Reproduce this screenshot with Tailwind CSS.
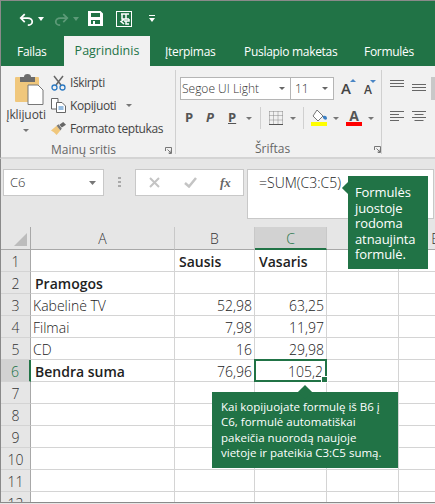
<!DOCTYPE html>
<html lang="lt">

<head>
    <meta charset="UTF-8">
    <title>Formulės kopijavimas</title>
    <script src="https://cdn.jsdelivr.net/npm/@tailwindcss/browser@4"></script>
</head>

<body class="bg-white">
    <div class="relative w-[435px] h-[504px] overflow-hidden bg-[#e6e6e6] font-['Open_Sans',sans-serif] text-[#444]">
        <!-- title bar -->
        <div class="h-[66px] bg-[#217346] border-t border-l border-[#8a8a8a] flex flex-col">
            <div class="h-[35px] flex items-center pl-[18px] text-white">
                <svg class="w-[15px] h-[16px]" viewBox="0 0 17 16" fill="none" stroke="#fff" stroke-width="2"><path d="M3 7 H10 C13 7 15 9 15 11 C15 13 13 15 10 15"/><path d="M6.500 2.500 L2 7 L6.500 11.500"/></svg>
                <svg class="w-[6px] h-[4px] ml-[4px]" viewBox="0 0 6 4" fill="#fff"><path d="M0 0H6L3 4Z"/></svg>
                <svg class="w-[15px] h-[16px] ml-[10px]" viewBox="0 0 17 16" fill="none" stroke="#5d9a78" stroke-width="2"><path d="M14 7 H7 C4 7 2 9 2 11 C2 13 4 15 7 15"/><path d="M10.500 2.500 L15 7 L10.500 11.500"/></svg>
                <svg class="w-[6px] h-[4px] ml-[4px]" viewBox="0 0 6 4" fill="#5d9a78"><path d="M0 0H6L3 4Z"/></svg>
                <svg class="w-[15px] h-[15px] ml-[9px]" viewBox="0 0 15 15" fill="#fff"><path d="M0 0H12.500L15 2.500V15H0ZM3 2V6H12V2ZM3 9V13H5V10H7V13H12V9Z"/></svg>
                <svg class="w-[16px] h-[16px] ml-[13px]" viewBox="0 0 16 16" fill="none" stroke="#fff"><rect x=".5" y=".5" width="15" height="15"/><path stroke-width="1.500" d="M5 3H13M10 3V8M6 3V8H13M13 8V10H8M8 13L5 10.500L8 8.500M10 10V13H13"/></svg>
                <svg class="w-[6px] h-[7px] ml-[17px]" viewBox="0 0 6 7" fill="#fff"><path d="M0 0H6V1H0ZM0 3H6L3 7Z"/></svg>
            </div>
            <!-- tabs -->
            <div class="flex h-[30px] text-[12px] tracking-[-0.3px] text-white">
                <div class="w-[63px] pl-[16px] pt-[7px]">Failas</div>
                <div class="w-[86px] bg-[#f1f1f1] text-[#217346] text-center text-[12.500px] tracking-normal pt-[6px]">Pagrindinis</div>
                <div class="w-[93px] pl-[15px] pt-[7px]">Įterpimas</div>
                <div class="w-[121px] pl-[1px] pt-[7px]">Puslapio maketas</div>
                <div class="pt-[7px]">Formulės</div>
            </div>
        </div>

        <!-- ribbon -->
        <div class="relative h-[93px] bg-[#f1f1f1] border-b-2 border-[#d4d4d4] border-l border-l-[#8a8a8a] flex pt-[4px] text-[12px]">
            <!-- clipboard group -->
            <div class="w-[175px] h-[84px] border-r border-[#d0d0d0] flex flex-col">
                <div class="flex h-[66px]">
                    <div class="w-[50px] flex flex-col items-center">
                        <svg class="w-[29px] h-[31px] mt-[4px] ml-[7px]" viewBox="0 0 29 31">
                            <rect x="0" y="3" width="24" height="25" rx="1" fill="#f0c77c"/>
                            <path d="M5 3H9Q9 0 12.500 0Q16 0 16 3H20V8H5Z" fill="#6b6b6b"/>
                            <path d="M13 11H23L28 16V30.500H13Z" fill="#fff" stroke="#777"/>
                        </svg>
                        <div class="text-[12px] tracking-[-0.1px] leading-[14px] mt-[3px]">Įklijuoti</div>
                        <svg class="w-[6px] h-[3px] mt-[7px]" viewBox="0 0 6 3" fill="#777"><path d="M0 0H6L3 3Z"/></svg>
                    </div>
                    <div class="flex flex-col pt-[1px] text-[12px] tracking-[-0.4px] leading-[23px]">
                        <div class="flex items-center gap-[4px]">
                            <svg class="w-[15px] h-[16px]" viewBox="0 0 15 16" fill="none"><path d="M3 1L10 10M12 1L5 10" stroke="#666" stroke-width="1.500"/><circle cx="3.500" cy="12.500" r="2.500" stroke="#2b79c2" stroke-width="1.300"/><circle cx="11.500" cy="12.500" r="2.500" stroke="#2b79c2" stroke-width="1.300"/></svg>
                            <span>Iškirpti</span>
                        </div>
                        <div class="flex items-center gap-[4px]">
                            <svg class="w-[15px] h-[15px]" viewBox="0 0 15 15" fill="#fff" stroke="#666"><path d="M.5.5H7V11H.5Z"/><path d="M5.500 4.500H11L14.500 8V14.500H5.500Z"/><path d="M7.500 9H12.500M7.500 11H12.500" stroke="#2b79c2"/></svg>
                            <span>Kopijuoti</span>
                            <svg class="w-[6px] h-[3px] ml-[6px]" viewBox="0 0 6 3" fill="#777"><path d="M0 0H6L3 3Z"/></svg>
                        </div>
                        <div class="flex items-center gap-[4px]">
                            <svg class="w-[15px] h-[15px]" viewBox="0 0 16 14"><path d="M0 9L6 4L10 9L6 14Q3 10 0 9Z" fill="#f0c77c"/><path d="M6 4L8 2.500L11.500 7L10 9Z" fill="#777"/><path d="M9 3L13 0L16 3L11.500 6Z" fill="#666"/></svg>
                            <span>Formato teptukas</span>
                        </div>
                    </div>
                </div>
                <div class="flex items-center h-[12px] mt-[8px] pl-[50px] text-[#666] text-[12px] whitespace-nowrap">
                    <span class="w-[114px]">Mainų sritis</span>
                    <svg class="w-[7px] h-[7px] shrink-0" viewBox="0 0 7 7" fill="none" stroke="#777"><path d="M.5 4V.5H6.500V6.500H4M2.500 2.500L6 6M6 3.500V6H3.500"/></svg>
                </div>
            </div>

            <!-- font group -->
            <div class="w-[206px] h-[84px] border-r border-[#d0d0d0] flex flex-col pl-[4px]">
                <div class="flex items-center h-[24px] mt-[7px]">
                    <div class="w-[111px] h-[23px] bg-white border border-[#b5b5b5] flex items-center justify-between pl-[1px] pr-[3px] text-[12px]">
                        <span class="text-[#333] font-light">Segoe UI Light</span>
                        <svg class="w-[6px] h-[3px] mr-[2px]" viewBox="0 0 6 3" fill="#666"><path d="M0 0H6L3 3Z"/></svg>
                    </div>
                    <div class="w-[43px] h-[23px] bg-white border border-l-0 border-[#b5b5b5] flex items-center justify-between pl-[4px] pr-[5px] text-[12px] text-[#333] font-light">
                        <span>11</span>
                        <svg class="w-[6px] h-[3px]" viewBox="0 0 6 3" fill="#666"><path d="M0 0H6L3 3Z"/></svg>
                    </div>
                    <span class="relative ml-[7px] text-[15px] font-semibold leading-none">A<svg class="absolute -top-[2px] left-[9px] w-[6px] h-[3px]" viewBox="0 0 6 3" fill="#4a86c5"><path d="M0 3H6L3 0Z"/></svg></span>
                    <span class="relative ml-[13px] text-[12px] font-semibold leading-none mt-[2px]">A<svg class="absolute -top-[4px] left-[6px] w-[6px] h-[3px]" viewBox="0 0 6 3" fill="#4a86c5"><path d="M0 0H6L3 3Z"/></svg></span>
                </div>
                <div class="flex items-center h-[22px] mt-[7px] pl-[5px] text-[13px] font-bold text-[#555]">
                    <span class="w-[21px] font-bold">P</span>
                    <span class="w-[22px] italic font-bold">P</span>
                    <span class="underline">P</span>
                    <svg class="w-[6px] h-[3px] ml-[10px]" viewBox="0 0 6 3" fill="#777"><path d="M0 0H6L3 3Z"/></svg>
                    <div class="w-px h-[22px] bg-[#d0d0d0] ml-[8px]"></div>
                    <svg class="w-[14px] h-[14px] ml-[8px]" viewBox="0 0 14 14" fill="none" stroke="#888" stroke-dasharray="1 1"><path d="M.5 .5H13.500M.5 4.500H13.500M.5 9H13.500M.5 .5V13M4.500 .5V13M9 .5V13M13.500 .5V13"/><path d="M0 13.500H14" stroke="#555" stroke-dasharray="none"/></svg>
                    <svg class="w-[6px] h-[3px] ml-[7px]" viewBox="0 0 6 3" fill="#777"><path d="M0 0H6L3 3Z"/></svg>
                    <div class="w-px h-[22px] bg-[#d0d0d0] ml-[7px]"></div>
                    <div class="flex flex-col items-center ml-[7px] w-[16px]">
                        <svg class="w-[15px] h-[12px]" viewBox="0 0 15 12"><path d="M5 0L11 6L6 11L1 6Z" fill="#fff" stroke="#777"/><path d="M11 6Q15 5 15 9Q13 11 11 8Z" fill="#3c80c4"/></svg>
                        <div class="w-[16px] h-[4px] bg-[#ffff00]"></div>
                    </div>
                    <svg class="w-[6px] h-[3px] ml-[6px]" viewBox="0 0 6 3" fill="#777"><path d="M0 0H6L3 3Z"/></svg>
                    <div class="flex flex-col items-center ml-[7px] w-[16px] leading-none">
                        <span class="text-[14px] leading-[12px] font-bold">A</span>
                        <div class="w-[16px] h-[4px] bg-[#ff0000]"></div>
                    </div>
                    <svg class="w-[6px] h-[3px] ml-[6px]" viewBox="0 0 6 3" fill="#777"><path d="M0 0H6L3 3Z"/></svg>
                </div>
                <div class="flex items-center h-[12px] mt-[14px] pl-[75px] text-[#666] text-[12px] whitespace-nowrap">
                    <span class="w-[120px]">Šriftas</span>
                    <svg class="w-[7px] h-[7px] shrink-0" viewBox="0 0 7 7" fill="none" stroke="#777"><path d="M.5 4V.5H6.500V6.500H4M2.500 2.500L6 6M6 3.500V6H3.500"/></svg>
                </div>
            </div>

            <!-- alignment group, cut off by the window -->
            <div class="flex-1 pl-[8px] pt-[10px] flex flex-col gap-[19px]">
                <div class="flex gap-[8px]">
                    <svg class="w-[14px] h-[8px]" viewBox="0 0 14 8" stroke="#666"><path d="M0 .5H14M0 3.500H14M0 6.500H14"/></svg>
                    <svg class="w-[14px] h-[8px] mt-[4px]" viewBox="0 0 14 8" stroke="#666"><path d="M0 .5H14M0 3.500H14M0 6.500H14"/></svg>
                </div>
                <div class="flex gap-[8px]">
                    <svg class="w-[14px] h-[10px]" viewBox="0 0 14 10" stroke="#666"><path d="M0 .5H14M0 3.500H9M0 6.500H14M0 9.500H9"/></svg>
                    <svg class="w-[14px] h-[10px]" viewBox="0 0 14 10" stroke="#666"><path d="M0 .5H14M2.500 3.500H11.500M0 6.500H14M2.500 9.500H11.500"/></svg>
                </div>
            </div>
            <div class="absolute right-0 top-[11px] w-[4px] h-[23px] bg-[#c8c8c8]"></div>
        </div>

        <!-- formula bar -->
        <div class="h-[68px] border-l border-[#8a8a8a] flex items-start pt-[10px] pl-[2px]">
            <div class="w-[101px] h-[27px] bg-white border border-[#c8c8c8] flex items-center justify-between pl-[6px] pr-[7px] text-[13px] font-light text-[#333]">
                <span>C6</span>
                <svg class="w-[7px] h-[4px]" viewBox="0 0 7 4" fill="#777"><path d="M0 0H7L3.500 4Z"/></svg>
            </div>
            <div class="w-[31px] h-[27px] flex items-center justify-center">
                <svg class="w-[3px] h-[11px]" viewBox="0 0 3 11" fill="#aaa"><path d="M0 0H3V2H0ZM0 4H3V6H0ZM0 8H3V10H0Z"/></svg>
            </div>
            <div class="w-[109px] h-[27px] bg-white border border-[#c8c8c8] flex items-center pl-[13px]">
                <svg class="w-[11px] h-[11px]" viewBox="0 0 11 11" stroke="#c4c4c4" stroke-width="2"><path d="M1 1L10 10M10 1L1 10"/></svg>
                <svg class="w-[13px] h-[11px] ml-[24px]" viewBox="0 0 13 11" fill="none" stroke="#c4c4c4" stroke-width="2.500"><path d="M1 6L5 9.500L12 1"/></svg>
                <span class="ml-[23px] text-[13px] italic font-['Liberation_Serif',serif] font-bold text-[#666]">fx</span>
            </div>
            <div class="w-[187px] h-[50px] ml-[3px] bg-white border border-[#c8c8c8] pl-[11px] text-[14px] font-light leading-[26px] text-[#222]">=SUM(C3:C5)</div>
        </div>

        <!-- worksheet -->
        <div class="h-[276px] border-l border-b border-[#8a8a8a] overflow-hidden bg-white text-[14px] text-[#222]">
            <div class="grid grid-cols-[30px_144px_80px_72px_72px_72px] grid-rows-[23px] auto-rows-[22px] w-[470px]">
                <div class="bg-[#e6e6e6] border-r border-b border-[#a8a8a8] relative"><svg class="absolute right-[3px] bottom-[3px] w-[13px] h-[13px]" viewBox="0 0 13 13" fill="#bcbcbc"><path d="M13 0V13H0Z"/></svg></div>
                <div class="bg-[#e6e6e6] border-b border-b-[#a8a8a8] border-r border-r-[#c8c8c8] text-center text-[#333] text-[14px] font-light leading-[24px]">A</div>
                <div class="bg-[#e6e6e6] border-b border-b-[#a8a8a8] border-r border-r-[#c8c8c8] text-center text-[#333] text-[14px] font-light leading-[24px]">B</div>
                <div class="bg-[#d2d2d2] border-b-2 border-b-[#217346] border-r border-r-[#c8c8c8] text-center text-[#217346] text-[14px] font-light leading-[24px]">C</div>
                <div class="bg-[#e6e6e6] border-b border-b-[#a8a8a8] border-r border-r-[#c8c8c8]"></div>
                <div class="bg-[#e6e6e6] border-b border-b-[#a8a8a8] text-center text-[#333] text-[14px] font-light leading-[24px]">E</div>

                <div class="bg-[#e6e6e6] border-r border-b border-r-[#a8a8a8] border-b-[#d4d4d4] text-center text-[#333] font-light leading-[23px]">1</div>
                <div class="border-r border-b border-[#d4d4d4]"></div>
                <div class="border-r border-b border-[#d4d4d4] font-semibold pl-[4px] leading-[23px]">Sausis</div>
                <div class="border-r border-b border-[#d4d4d4] font-semibold pl-[4px] leading-[23px]">Vasaris</div>
                <div class="border-r border-b border-[#d4d4d4]"></div>
                <div class="border-b border-[#d4d4d4]"></div>

                <div class="bg-[#e6e6e6] border-r border-b border-r-[#a8a8a8] border-b-[#d4d4d4] text-center text-[#333] font-light leading-[23px]">2</div>
                <div class="border-r border-b border-[#d4d4d4] font-semibold pl-[4px] leading-[23px]">Pramogos</div>
                <div class="border-r border-b border-[#d4d4d4]"></div>
                <div class="border-r border-b border-[#d4d4d4]"></div>
                <div class="border-r border-b border-[#d4d4d4]"></div>
                <div class="border-b border-[#d4d4d4]"></div>

                <div class="bg-[#e6e6e6] border-r border-b border-r-[#a8a8a8] border-b-[#d4d4d4] text-center text-[#333] font-light leading-[23px]">3</div>
                <div class="border-r border-b border-[#d4d4d4] pl-[2px] font-light leading-[23px]">Kabelinė TV</div>
                <div class="border-r border-b border-[#d4d4d4] text-right pr-[2px] font-light leading-[23px]">52,98</div>
                <div class="border-r border-b border-[#d4d4d4] text-right pr-[2px] font-light leading-[23px]">63,25</div>
                <div class="border-r border-b border-[#d4d4d4]"></div>
                <div class="border-b border-[#d4d4d4]"></div>

                <div class="bg-[#e6e6e6] border-r border-b border-r-[#a8a8a8] border-b-[#d4d4d4] text-center text-[#333] font-light leading-[23px]">4</div>
                <div class="border-r border-b border-[#d4d4d4] pl-[2px] font-light leading-[23px]">Filmai</div>
                <div class="border-r border-b border-[#d4d4d4] text-right pr-[2px] font-light leading-[23px]">7,98</div>
                <div class="border-r border-b border-[#d4d4d4] text-right pr-[2px] font-light leading-[23px]">11,97</div>
                <div class="border-r border-b border-[#d4d4d4]"></div>
                <div class="border-b border-[#d4d4d4]"></div>

                <div class="bg-[#e6e6e6] border-r border-b border-r-[#a8a8a8] border-b-[#d4d4d4] text-center text-[#333] font-light leading-[23px]">5</div>
                <div class="border-r border-b border-[#d4d4d4] pl-[2px] font-light leading-[23px]">CD</div>
                <div class="border-r border-b border-[#d4d4d4] text-right pr-[2px] font-light leading-[23px]">16</div>
                <div class="border-r border-b border-[#d4d4d4] text-right pr-[2px] font-light leading-[23px]">29,98</div>
                <div class="border-r border-b border-[#d4d4d4]"></div>
                <div class="border-b border-[#d4d4d4]"></div>

                <div class="bg-[#d2d2d2] border-r-2 border-b border-r-[#217346] border-b-[#d4d4d4] text-center text-[#217346] font-light leading-[23px]">6</div>
                <div class="border-r border-b border-[#d4d4d4] font-semibold pl-[4px] leading-[23px]">Bendra suma</div>
                <div class="border-r border-b border-[#d4d4d4] text-right pr-[2px] font-light leading-[23px]">76,96</div>
                <div class="relative border-2 border-[#217346] -mt-px -ml-px text-right pr-[2px] font-light leading-[21px]">105,2<div class="absolute -right-[3px] -bottom-[3px] w-[5px] h-[5px] bg-[#217346] border border-white box-content"></div></div>
                <div class="border-r border-b border-[#d4d4d4]"></div>
                <div class="border-b border-[#d4d4d4]"></div>

                <div class="bg-[#e6e6e6] border-r border-b border-r-[#a8a8a8] border-b-[#d4d4d4] text-center text-[#333] font-light leading-[23px]">7</div>
                <div class="border-r border-b border-[#d4d4d4]"></div><div class="border-r border-b border-[#d4d4d4]"></div><div class="border-r border-b border-[#d4d4d4]"></div><div class="border-r border-b border-[#d4d4d4]"></div><div class="border-b border-[#d4d4d4]"></div>
                <div class="bg-[#e6e6e6] border-r border-b border-r-[#a8a8a8] border-b-[#d4d4d4] text-center text-[#333] font-light leading-[23px]">8</div>
                <div class="border-r border-b border-[#d4d4d4]"></div><div class="border-r border-b border-[#d4d4d4]"></div><div class="border-r border-b border-[#d4d4d4]"></div><div class="border-r border-b border-[#d4d4d4]"></div><div class="border-b border-[#d4d4d4]"></div>
                <div class="bg-[#e6e6e6] border-r border-b border-r-[#a8a8a8] border-b-[#d4d4d4] text-center text-[#333] font-light leading-[23px]">9</div>
                <div class="border-r border-b border-[#d4d4d4]"></div><div class="border-r border-b border-[#d4d4d4]"></div><div class="border-r border-b border-[#d4d4d4]"></div><div class="border-r border-b border-[#d4d4d4]"></div><div class="border-b border-[#d4d4d4]"></div>
                <div class="bg-[#e6e6e6] border-r border-b border-r-[#a8a8a8] border-b-[#d4d4d4] text-center text-[#333] font-light leading-[23px]">10</div>
                <div class="border-r border-b border-[#d4d4d4]"></div><div class="border-r border-b border-[#d4d4d4]"></div><div class="border-r border-b border-[#d4d4d4]"></div><div class="border-r border-b border-[#d4d4d4]"></div><div class="border-b border-[#d4d4d4]"></div>
                <div class="bg-[#e6e6e6] border-r border-b border-r-[#a8a8a8] border-b-[#d4d4d4] text-center text-[#333] font-light leading-[23px]">11</div>
                <div class="border-r border-b border-[#d4d4d4]"></div><div class="border-r border-b border-[#d4d4d4]"></div><div class="border-r border-b border-[#d4d4d4]"></div><div class="border-r border-b border-[#d4d4d4]"></div><div class="border-b border-[#d4d4d4]"></div>
                <div class="bg-[#e6e6e6] border-r border-r-[#a8a8a8] text-center text-[#333] font-light leading-[23px]">12</div>
                <div class="border-r border-[#d4d4d4]"></div><div class="border-r border-[#d4d4d4]"></div><div class="border-r border-[#d4d4d4]"></div><div class="border-r border-[#d4d4d4]"></div><div></div>
            </div>
        </div>

        <!-- callouts -->
        <div class="absolute left-[348px] top-[176px] w-[80px] h-[93px] bg-[#217346] text-white text-[13px] tracking-[-0.1px] leading-[15.500px] pl-[7px] pt-[9px]">
            <div class="absolute -left-[4px] top-[7px] w-[10px] h-[10px] rotate-45 bg-[#217346]"></div>
            <div class="relative">Formulės juostoje rodoma atnaujinta formulė.</div>
        </div>
        <div class="absolute left-[212px] top-[392px] w-[186px] h-[76px] bg-[#217346] text-white text-[11.500px] leading-[15.300px] pl-[9px] pt-[7px]">
            <div class="absolute left-[88px] -top-[5px] w-[10px] h-[10px] rotate-45 bg-[#217346]"></div>
            <div class="relative">Kai kopijuojate formulę iš B6 į<br>C6, formulė automatiškai<br>pakeičia nuorodą naujoje<br>vietoje ir pateikia C3:C5 sumą.</div>
        </div>
    </div>
</body>

</html>
